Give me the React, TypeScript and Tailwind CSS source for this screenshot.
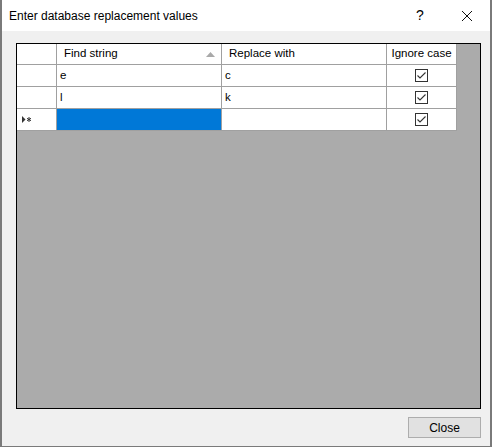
import React from 'react';

const font = { fontFamily: '"Liberation Sans", Arial, sans-serif' };

function Check() {
  return (
    <svg width="13" height="13" viewBox="0 0 13 13">
      <rect x="0.5" y="0.5" width="12" height="12" fill="#fff" stroke="#333" />
      <path d="M2.5 6.5 L5 9 L10.5 3.5" fill="none" stroke="#333" strokeWidth="1.1" />
    </svg>
  );
}

const rows = [
  { find: 'e', replace: 'c' },
  { find: 'l', replace: 'k' },
];

export default function App() {
  return (
    <div
      className="w-[492px] h-[447px] flex flex-col bg-[#f0f0f0] border-l-2 border-r-2 border-b border-[#7a7a7a] text-[11.5px] text-black"
      style={font}
    >
      {/* Title bar */}
      <div className="h-[31px] bg-white flex items-center pl-[7px] text-[12px]">
        <span className="flex-1">Enter database replacement values</span>
        <span className="w-[46px] text-center text-[14px] mr-[1px]">?</span>
        <span className="w-[46px] flex justify-center">
          <svg width="12" height="12" viewBox="0 0 12 12">
            <path d="M1 1 L11 11 M11 1 L1 11" stroke="#111" strokeWidth="1" />
          </svg>
        </span>
      </div>

      {/* Grid */}
      <div className="mt-[12px] ml-[14px] w-[465px] h-[366px] border border-black bg-[#ababab] flex flex-col">
        <div className="flex h-[21px] bg-white w-fit">
          <div className="w-[40px] border-r border-b border-[#a0a0a0]" />
          <div className="w-[165px] border-r border-b border-[#a0a0a0] flex items-center pl-[7px] pr-[6px]">
            <span className="flex-1">Find string</span>
            <svg width="9" height="5" viewBox="0 0 9 5">
              <path d="M0 5 L4.5 0 L9 5 Z" fill="#a9a9a9" />
            </svg>
          </div>
          <div className="w-[165px] border-r border-b border-[#a0a0a0] flex items-center pl-[7px]">Replace with</div>
          <div className="w-[70px] border-r border-b border-[#a0a0a0] flex items-center justify-center">Ignore case</div>
        </div>

        {rows.map((r, i) => (
          <div key={i} className="flex h-[22px] bg-white w-fit">
            <div className="w-[40px] border-r border-b border-[#a0a0a0]" />
            <div className="w-[165px] border-r border-b border-[#a0a0a0] flex items-center pl-[3px]">{r.find}</div>
            <div className="w-[165px] border-r border-b border-[#a0a0a0] flex items-center pl-[3px]">{r.replace}</div>
            <div className="w-[70px] border-r border-b border-[#a0a0a0] flex items-center justify-center">
              <Check />
            </div>
          </div>
        ))}

        <div className="flex h-[22px] bg-white w-fit">
          <div className="w-[40px] border-r border-b border-[#a0a0a0] flex items-center pl-[5px]">
            <svg width="10" height="7" viewBox="0 0 10 7">
              <path d="M0 0 L3.5 3.5 L0 7 Z" fill="#333" />
              <path d="M7 1 V6 M5 2.3 L9 4.7 M9 2.3 L5 4.7" stroke="#333" strokeWidth="1" />
            </svg>
          </div>
          <div className="w-[165px] border-r border-b border-[#a0a0a0] bg-[#0078d7]" />
          <div className="w-[165px] border-r border-b border-[#a0a0a0]" />
          <div className="w-[70px] border-r border-b border-[#a0a0a0] flex items-center justify-center">
            <Check />
          </div>
        </div>
      </div>

      {/* Footer */}
      <div className="flex justify-end mt-[8px] mr-[9px]">
        <button className="w-[73px] h-[21px] bg-[#e1e1e1] border border-[#adadad] text-[12px]" style={font}>
          Close
        </button>
      </div>
    </div>
  );
}
